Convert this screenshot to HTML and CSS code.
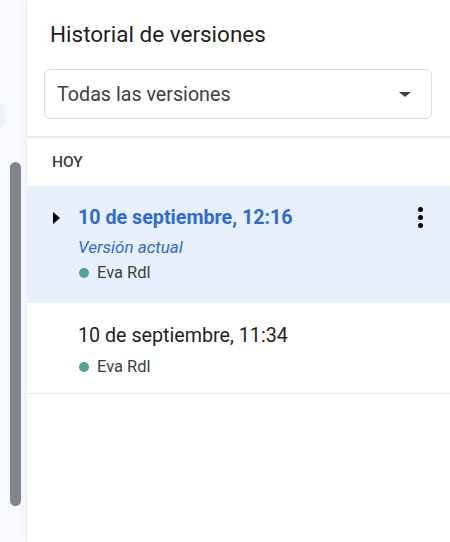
FILE: index.html
```html
<!DOCTYPE html>
<html lang="es">
<head>
<meta charset="utf-8">
<title>Historial de versiones</title>
<link rel="stylesheet" href="styles.css">
</head>
<body>
<div class="app">
  <div class="rail">
    <div class="rail-blob"></div>
    <div class="thumb"></div>
  </div>
  <div class="panel">
    <h1 class="title">Historial de versiones</h1>
    <div class="select">
      <span class="select-text">Todas las versiones</span>
      <span class="caret"></span>
    </div>
    <div class="divider"></div>
    <div class="section">HOY</div>
    <div class="version current">
      <div class="toggle"><span class="tri"></span></div>
      <div class="info">
        <div class="v-title">10 de septiembre, 12:16</div>
        <div class="v-sub">Versión actual</div>
        <div class="v-author author-tight"><span class="dot"></span>Eva Rdl</div>
      </div>
      <div class="kebab"><span></span><span></span><span></span></div>
    </div>
    <div class="version">
      <div class="toggle"></div>
      <div class="info">
        <div class="v-title plain">10 de septiembre, 11:34</div>
        <div class="v-author"><span class="dot"></span>Eva Rdl</div>
      </div>
    </div>
  </div>
</div>
</body>
</html>
```
FILE: styles.css
```css
* { box-sizing: border-box; }
html, body { margin: 0; padding: 0; }
body {
  font-family: Roboto, "Noto Sans", "Liberation Sans", sans-serif;
  background: #fff;
  color: #1f1f1f;
}
.app {
  display: flex;
  width: 450px;
  height: 542px;
  overflow: hidden;
}
.rail {
  position: relative;
  width: 27px;
  flex: none;
  background: #f8f9fc;
  padding-top: 162px;
}
.rail-blob {
  position: absolute;
  left: -34px;
  top: 96px;
  width: 40px;
  height: 40px;
  border-radius: 50%;
  background: #edf3f8;
}
.thumb {
  margin-left: 10px;
  width: 11px;
  height: 344px;
  border-radius: 6px;
  background: #80868b;
}
.panel {
  flex: 1;
  background: #fff;
  box-shadow: -2px 0 5px rgba(60, 64, 67, 0.06);
  position: relative;
}
.title {
  margin: 0;
  padding: 21px 0 0 23px;
  font-size: 22.5px;
  line-height: 26px;
  font-weight: 400;
  color: #1f1f1f;
}
.select {
  margin: 22px 18px 0 17px;
  height: 50px;
  border: 1px solid #dadce0;
  border-radius: 6px;
  display: flex;
  align-items: center;
  justify-content: space-between;
  padding: 0 20px 0 12px;
}
.select-text {
  font-size: 19.7px;
  color: #3c4043;
}
.caret {
  width: 0;
  height: 0;
  border-left: 6px solid transparent;
  border-right: 6px solid transparent;
  border-top: 5px solid #3c4043;
}
.divider {
  margin-top: 17px;
  height: 2px;
  background: #e8eaed;
}
.section {
  height: 48px;
  display: flex;
  align-items: center;
  padding-left: 25px;
  font-size: 15.5px;
  font-weight: 500;
  color: #3c4043;
}
.version {
  display: flex;
  align-items: flex-start;
  padding: 20px 0 14px 26px;
  border-bottom: 1px solid #e8eaed;
}
.version.current {
  background: #e8f0fe;
  border-bottom: none;
  padding: 19px 0 18px 26px;
}
.toggle {
  width: 25px;
  flex: none;
  height: 26px;
  display: flex;
  align-items: center;
}
.tri {
  width: 0;
  height: 0;
  border-top: 6px solid transparent;
  border-bottom: 6px solid transparent;
  border-left: 7px solid #000;
}
.info { flex: 1; }
.v-title {
  font-size: 19.7px;
  line-height: 26px;
  font-weight: 700;
  color: #2f6ad6;
}
.v-title.plain {
  font-weight: 400;
  color: #1f1f1f;
}
.v-sub {
  margin-top: 4px;
  font-size: 17px;
  line-height: 24px;
  font-style: italic;
  color: #2f6ad6;
}
.v-author {
  margin-top: 6px;
  font-size: 16.5px;
  line-height: 24px;
  color: #3c4043;
  display: flex;
  align-items: center;
}
.v-author.author-tight { margin-top: 2px; }
.dot {
  width: 10px;
  height: 10px;
  border-radius: 50%;
  background: #4fa596;
  margin: 0 8px 0 1px;
}
.kebab {
  width: 6px;
  margin-right: 27px;
  padding-top: 2px;
  display: flex;
  flex-direction: column;
  align-items: center;
  gap: 3px;
}
.kebab span {
  width: 5px;
  height: 5px;
  border-radius: 50%;
  background: #000;
}
```
